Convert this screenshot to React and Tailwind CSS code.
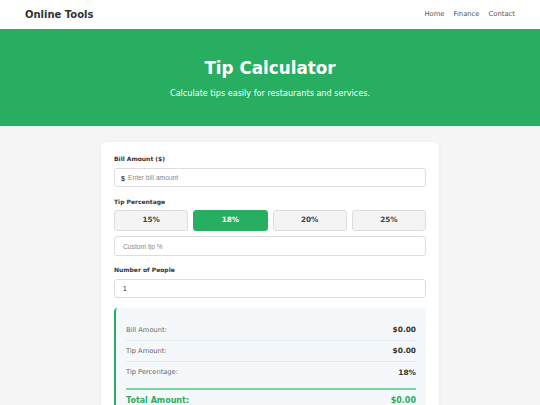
import React from 'react';

const tips = ['15%', '18%', '20%', '25%'];
const links = ['Home', 'Finance', 'Contact'];

function Row({ label, value, last }) {
  return (
    <div className={`flex h-[21px] items-center justify-between ${last ? '' : 'border-b border-[#e6ebef]'}`}>
      <span className="text-[6.7px] text-[#666]">{label}</span>
      <span className="text-[7.4px] font-bold text-[#333]">{value}</span>
    </div>
  );
}

export default function App() {
  return (
    <div className="min-h-[405px] bg-[#f5f5f5] font-['DejaVu_Sans',sans-serif] text-[#333]">
      <header className="flex h-[29px] items-center justify-between bg-white px-[25px] shadow-[0_1px_2px_rgba(0,0,0,0.08)]">
        <span className="text-[10px] font-bold text-[#333]">Online Tools</span>
        <nav className="flex gap-[9px] text-[6.8px] text-[#555]">
          {links.map((l) => (
            <span key={l} className="cursor-pointer">{l}</span>
          ))}
        </nav>
      </header>

      <section className="flex h-[97px] flex-col items-center bg-[#27ae60] pt-[29px] text-white">
        <h1 className="text-[16.8px] font-bold leading-[20px]">Tip Calculator</h1>
        <p className="mt-[9px] text-[8.1px] leading-[12px]">Calculate tips easily for restaurants and services.</p>
      </section>

      <main className="pt-[16px]">
        <div className="mx-auto w-[338px] rounded-[5px] bg-white px-[13px] pt-[13px] pb-[14px] shadow-[0_1px_4px_rgba(0,0,0,0.06)]">
          <label className="mb-[5px] block text-[6px] font-bold leading-[8px]">Bill Amount ($)</label>
          <div className="relative">
            <span className="absolute left-[7px] top-[7px] text-[7px] font-bold leading-[8px] text-[#444] font-['Liberation_Sans',sans-serif]">$</span>
            <input
              type="text"
              placeholder="Enter bill amount"
              className="block h-[19px] w-full rounded-[3px] border border-[#ddd] pl-[13px] font-['Liberation_Sans',sans-serif] text-[6.7px] placeholder:text-[#888] outline-none"
            />
          </div>

          <label className="mt-[11px] mb-[4px] block text-[6px] font-bold leading-[8px]">Tip Percentage</label>
          <div className="grid grid-cols-4 gap-[5px]">
            {tips.map((t) => (
              <button
                key={t}
                className={
                  t === '18%'
                    ? 'h-[21px] rounded-[3px] border border-[#27ae60] bg-[#27ae60] text-[7.3px] font-bold text-white'
                    : 'h-[21px] rounded-[3px] border border-[#ddd] bg-[#f4f4f4] text-[7.3px] font-bold text-[#444]'
                }
              >
                {t}
              </button>
            ))}
          </div>
          <input
            type="text"
            placeholder="Custom tip %"
            className="mt-[5px] block h-[20px] w-full rounded-[3px] border border-[#ddd] pl-[8px] font-['Liberation_Sans',sans-serif] text-[6.7px] placeholder:text-[#888] outline-none"
          />

          <label className="mt-[10px] mb-[5px] block text-[6px] font-bold leading-[8px]">Number of People</label>
          <input
            type="text"
            defaultValue="1"
            className="block h-[19px] w-full rounded-[3px] border border-[#ddd] pl-[8px] font-['Liberation_Sans',sans-serif] text-[6.7px] text-[#222] outline-none"
          />

          <div className="mt-[10px] rounded-[4px] border-l-2 border-[#27ae60] bg-[#f5f8fa] px-[10px] pt-[12px] pb-[4px]">
            <Row label="Bill Amount:" value="$0.00" />
            <Row label="Tip Amount:" value="$0.00" />
            <Row label="Tip Percentage:" value="18%" last />
            <div className="mt-[5px] flex items-center justify-between border-t-2 border-[#7bd3a0] pt-[5px] text-[8px] font-bold leading-[12px] text-[#27ae60]">
              <span>Total Amount:</span>
              <span>$0.00</span>
            </div>
          </div>
        </div>
      </main>
    </div>
  );
}
